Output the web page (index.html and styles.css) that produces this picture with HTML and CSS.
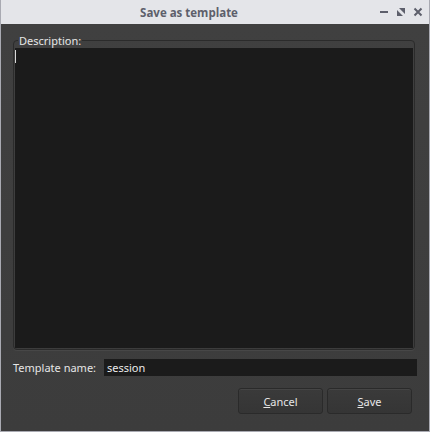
FILE: index.html
```html
<!DOCTYPE html>
<html>
<head>
<meta charset="utf-8">
<link rel="stylesheet" href="styles.css">
</head>
<body>
<div class="window">
  <div class="titlebar">
    <div class="title">Save as template</div>
    <div class="controls">
      <svg class="ctl" width="10" height="10" viewBox="0 0 10 10"><rect x="1" y="4" width="8" height="2" fill="#5d5f6b"/></svg>
      <svg class="ctl" width="10" height="10" viewBox="0 0 10 10"><path d="M3 1 L9 1 L9 7 Z M1 3 L7 9 L1 9 Z" fill="#5d5f6b"/></svg>
      <svg class="ctl" width="10" height="10" viewBox="0 0 10 10"><path d="M1.5 1.5 L8.5 8.5 M8.5 1.5 L1.5 8.5" stroke="#5d5f6b" stroke-width="2"/></svg>
    </div>
  </div>
  <div class="content">
    <fieldset class="group">
      <legend class="legend">Description:</legend>
      <div class="textarea"><span class="caret"></span></div>
    </fieldset>
    <div class="namerow">
      <span class="label">Template name:</span>
      <div class="input">session</div>
    </div>
    <div class="buttons">
      <div class="btn"><span class="u">C</span>ancel</div>
      <div class="btn"><span class="u">S</span>ave</div>
    </div>
  </div>
</div>
</body>
</html>
```

FILE: styles.css
```css
html, body {
  margin: 0;
  padding: 0;
  background: #3d3d3d;
}
.window {
  width: 430px;
  height: 432px;
  box-sizing: border-box;
  display: flex;
  flex-direction: column;
  font-family: "Noto Sans", "Open Sans", sans-serif;
  font-size: 11px;
  color: #e6e6e6;
  border-left: 1px solid #a9aab2;
  border-right: 1px solid #a9aab2;
  border-bottom: 1px solid #a9aab2;
}
.titlebar {
  height: 24px;
  flex: none;
  background: #e4e5e9;
  display: flex;
  align-items: center;
  justify-content: center;
  position: relative;
}
.title {
  font-family: "Open Sans", "Noto Sans", sans-serif;
  font-weight: bold;
  font-size: 11.5px;
  color: #5d5f6b;
  margin-left: -52px;
}
.controls {
  position: absolute;
  right: 6px;
  top: 7px;
  display: flex;
  gap: 7px;
}
.ctl { display: block; }
.content {
  flex: 1;
  background: linear-gradient(#404040, #3c3c3c);
  display: flex;
  flex-direction: column;
  padding: 10px 12px 0 12px;
}
.group {
  margin: 0;
  padding: 0 1px 1px 1px;
  border: 1px solid #2b2b2b;
  border-radius: 4px;
  width: 402px;
  box-sizing: border-box;
  box-shadow: 0 1px 0 #474747;
}
.legend {
  padding: 0 1px;
  margin-left: 3px;
  font-size: 11px;
  line-height: 13px;
  color: #e6e6e6;
}
.textarea {
  height: 300px;
  background: #1b1b1b;
  margin-top: 1px;
  position: relative;
}
.caret {
  position: absolute;
  left: 0;
  top: 2px;
  width: 1px;
  height: 13px;
  background: #d8d8d8;
}
.namerow {
  display: flex;
  align-items: center;
  margin-top: 9px;
  height: 17px;
}
.label {
  width: 91px;
  flex: none;
  white-space: nowrap;
}
.input {
  width: 313px;
  height: 17px;
  background: #1b1b1b;
  line-height: 17px;
  padding-left: 3px;
  box-sizing: border-box;
  color: #ececec;
}
.buttons {
  display: flex;
  justify-content: flex-end;
  gap: 4px;
  margin-top: 12px;
  padding-right: 5px;
}
.btn {
  width: 85px;
  height: 26px;
  box-sizing: border-box;
  border: 1px solid #2a2a2a;
  border-radius: 3px;
  background: linear-gradient(#3a3a3a, #353535);
  box-shadow: inset 0 1px 0 #454545;
  display: flex;
  align-items: center;
  justify-content: center;
  color: #e6e6e6;
}
.u { text-decoration: underline; }
```
